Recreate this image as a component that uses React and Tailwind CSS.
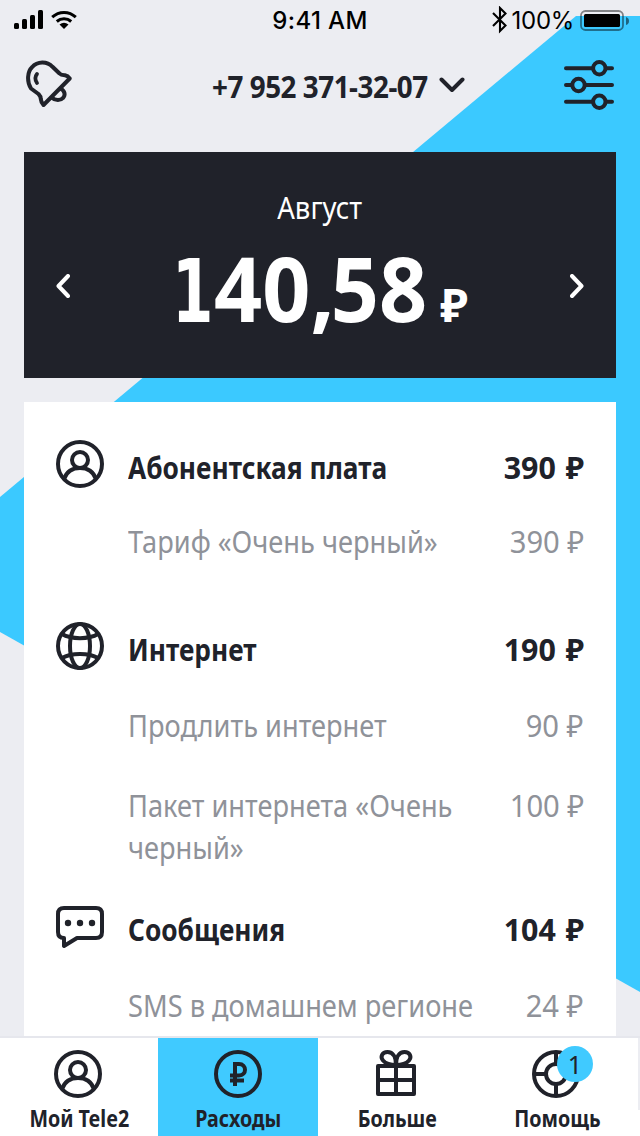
const INK = '#20222a';

function Bell() {
  return (
    <svg viewBox="0 0 48 50" className="h-[50px] w-12" fill="none" stroke={INK} strokeWidth="4" strokeLinejoin="round" strokeLinecap="round">
      <path d="M7 28.500C2.500 21.500 3.500 11.500 8 7.300C13.500 1 23 1 28.500 6.800L35.500 13.500C37 15.200 38.500 15.200 41 15.300Q43.800 15.800 45.700 18.500L19.500 45Q17 42 16.800 39C16.800 36.500 16 35.500 14.500 34Z" />
      <path d="M13 14C11 16.500 11 20 13 23" strokeWidth="3.800" />
      <path d="M36.500 28.500C41.300 31 41.500 35.500 39 38C36.500 40.800 31.500 41 27.500 37.500" strokeLinecap="butt" />
    </svg>
  );
}

function Sliders() {
  return (
    <svg viewBox="0 0 50 50" className="h-[50px] w-[50px]" fill="none" stroke={INK} strokeWidth="4" strokeLinecap="round">
      <path d="M2 8.200H28M42 8.200H48M2 25H8M21 25H48M2 41.800H28M42 41.800H48" />
      <circle cx="35.300" cy="8.200" r="6.200" />
      <circle cx="14.500" cy="25" r="6.200" />
      <circle cx="35.300" cy="41.800" r="6.200" />
    </svg>
  );
}

function Chevron({ d, className, color = '#fff', viewBox }) {
  return (
    <svg viewBox={viewBox} className={className} fill="none" stroke={color} strokeWidth="4" strokeLinecap="round" strokeLinejoin="round">
      <path d={d} />
    </svg>
  );
}

function Person() {
  return (
    <svg viewBox="0 0 48 48" className="h-12 w-12 shrink-0" fill="none" stroke={INK} strokeWidth="4">
      <circle cx="24" cy="24" r="22" />
      <circle cx="24" cy="20" r="8" />
      <path d="M8 39C10.500 32 16 28 24 28S37.500 32 40 39" />
    </svg>
  );
}

function Globe() {
  return (
    <svg viewBox="0 0 48 48" className="h-12 w-12 shrink-0" fill="none" stroke={INK} strokeWidth="4">
      <circle cx="24" cy="24" r="22" />
      <ellipse cx="24" cy="24" rx="10" ry="22" />
      <path d="M6 12C15 17.500 33 17.500 42 12M6 36C15 30.500 33 30.500 42 36" />
    </svg>
  );
}

function Bubble() {
  return (
    <svg viewBox="0 0 48 48" className="h-12 w-12 shrink-0" fill="none" stroke={INK} strokeWidth="4" strokeLinejoin="round">
      <path d="M8 6H40Q46 6 46 12V30Q46 36 40 36H21L8 44V36Q2 36 2 30V12Q2 6 8 6Z" />
      <g fill={INK} stroke="none">
        <circle cx="12" cy="21" r="3.200" />
        <circle cx="24" cy="21" r="3.200" />
        <circle cx="36" cy="21" r="3.200" />
      </g>
    </svg>
  );
}

function RubleCoin() {
  return (
    <svg viewBox="0 0 48 48" className="h-12 w-12" fill="none" stroke={INK} strokeWidth="4">
      <circle cx="24" cy="24" r="22" />
      <path d="M21 36V14H25C33 14 33 25.500 25 25.500H16M16 30.500H30" />
    </svg>
  );
}

function Gift() {
  return (
    <svg viewBox="0 0 48 48" className="h-12 w-12" fill="none" stroke={INK} strokeWidth="4" strokeLinejoin="round">
      <path d="M6 16H42V44H6ZM6 30H42M24 14V44" />
      <path d="M24 15C24 7 21 2 15.500 2C10 2 8 7 11 10.500C14 14 19 15 24 15C29 15 34 14 37 10.500C40 7 38 2 32.500 2C27 2 24 7 24 15Z" />
    </svg>
  );
}

function Lifebuoy() {
  return (
    <svg viewBox="0 0 48 48" className="h-12 w-12" fill="none" stroke={INK} strokeWidth="4">
      <circle cx="24" cy="24" r="22" />
      <circle cx="24" cy="24" r="10" />
      <path d="M24 2V14M24 34V46M2 24H14M34 24H46" />
    </svg>
  );
}

function StatusBar() {
  return (
    <div className="flex h-10 items-center text-black">
      <div className="flex w-[213px] items-center pl-[14px]">
        <svg viewBox="0 0 30 20" className="h-5 w-[30px]">
          <rect x="0" y="13" width="5" height="6" rx="1.500" />
          <rect x="8" y="9" width="5" height="10" rx="1.500" />
          <rect x="16" y="5" width="5" height="14" rx="1.500" />
          <rect x="24" y="0" width="5" height="19" rx="1.500" />
        </svg>
        <svg viewBox="0 0 26 20" className="ml-[7px] h-5 w-[26px]" fill="none" stroke="#000" strokeWidth="3">
          <path d="M1.200 7.200C8 .9 18 .9 24.800 7.200M5.800 11.500C10 7.800 16 7.800 20.200 11.500" />
          <path d="M8.500 14.500Q13 11 17.500 14.500L13 19Z" fill="#000" stroke="none" />
        </svg>
      </div>
      <div className="flex w-[214px] justify-center pt-[2px] font-['Inter'] text-[24px] font-medium tracking-[0.4px]">9:41 AM</div>
      <div className="flex w-[213px] items-center justify-end pr-[10px]">
        <svg viewBox="0 0 16 28" className="mr-1 h-7 w-4" fill="none" stroke="#000" strokeWidth="2.100">
          <path d="M1 7L13.500 19.500L8 25V2L13.500 7.500L1 20" />
        </svg>
        <span className="pt-[2px] font-['Inter'] text-[24px] tracking-[-0.3px]">100%</span>
        <svg viewBox="0 0 50 22" className="mt-[2px] ml-[6px] h-[22px] w-[50px]">
          <rect x="1" y="1" width="42" height="19" rx="4.500" fill="none" stroke="#000" strokeOpacity=".45" strokeWidth="1.800" />
          <rect x="4" y="4" width="36" height="13" rx="1.500" />
          <path d="M46 7Q49 8 49 11T46 15Z" fillOpacity=".5" />
        </svg>
      </div>
    </div>
  );
}

function SectionHead({ icon, title, amount }) {
  return (
    <div className="flex h-12 items-start font-bold text-[#20222a]">
      {icon}
      <span className="mt-[6px] ml-6 min-w-0 flex-1 origin-left scale-x-[0.847] whitespace-nowrap">{title}</span>
      <span className="mt-[6px] origin-right scale-x-[0.980] whitespace-nowrap [word-spacing:2px]">{amount} ₽</span>
    </div>
  );
}

function Item({ children, amount }) {
  return (
    <div className="flex items-start pl-[72px] text-[#8f9299]">
      <span className="min-w-0 flex-1 origin-left scale-x-[0.878] whitespace-nowrap">{children}</span>
      <span className="origin-right scale-x-[0.940] whitespace-nowrap">{amount} ₽</span>
    </div>
  );
}

function Tab({ icon, label, width, active, badge }) {
  return (
    <div className={`relative flex flex-col items-center pt-3 ${width} ${active ? 'bg-[#40caff]' : 'bg-white'}`}>
      <div className={active ? '' : 'mr-[2px]'}>{icon}</div>
      <span className="mt-[3px] origin-center scale-x-[0.855] text-[23px] leading-[34px] font-bold whitespace-nowrap">{label}</span>
      {badge && (
        <span className="absolute top-2 left-[81px] flex h-9 w-9 items-center justify-center rounded-full bg-[#40caff] text-[25px]">{badge}</span>
      )}
    </div>
  );
}

export default function App() {
  return (
    <div className="relative isolate flex h-[1136px] w-[640px] flex-col overflow-hidden bg-[#ecedf2] font-['Noto_Sans',sans-serif] text-[31px] leading-[42px] text-[#20222a]">
      <div className="absolute inset-0 -z-10 bg-[#3bc9ff] [clip-path:polygon(576px_16px,640px_16px,640px_992px,0_632px,0_497px)]" />
      <StatusBar />
      <header className="flex h-28 items-start justify-between pt-5 pr-[26px] pl-6">
        <Bell />
        <div className="mt-[5px] flex items-center">
          <span className="origin-right scale-x-[0.896] font-bold tracking-[-0.500px] whitespace-nowrap">+7 952 371-32-07</span>
          <Chevron viewBox="0 0 26 16" className="mr-[-16px] mb-[2px] ml-[11px] h-4 w-[26px]" color={INK} d="M2.500 2.500L13 13L23.500 2.500" />
        </div>
        <Sliders />
      </header>
      <section className="mx-6 flex h-[226px] shrink-0 items-center justify-between bg-[#20222a] px-8 text-white">
        <Chevron viewBox="0 0 14 24" className="mt-[42px] h-6 w-[14px]" d="M12 2L2.500 12L12 22" />
        <div className="flex h-full flex-col items-center pt-[34px]">
          <span className="scale-x-[0.890]">Август</span>
          <div className="mt-[5px] flex items-baseline leading-[110px] font-bold whitespace-nowrap">
            <span className="w-[42px] origin-left scale-x-[0.760] font-['DejaVu_Sans_Condensed','DejaVu_Sans'] text-[87px]">1</span>
            <span className="origin-left scale-x-[0.947] text-[89px]">40<span className="tracking-[-4px]">,</span>58</span>
            <span className="ml-[1px] text-[46px]">₽</span>
          </div>
        </div>
        <Chevron viewBox="0 0 14 24" className="mt-[42px] h-6 w-[14px]" d="M2 2L11.500 12L2 22" />
      </section>
      <main className="mx-6 mt-6 min-h-0 flex-1 overflow-hidden bg-white px-8 pt-[38px]">
        <SectionHead icon={<Person />} title="Абонентская плата" amount="390" />
        <div className="pt-8"><Item amount="390">Тариф «Очень черный»</Item></div>
        <div className="pt-[60px]"><SectionHead icon={<Globe />} title="Интернет" amount="190" /></div>
        <div className="flex flex-col gap-[38px] pt-[34px]">
          <Item amount="90">Продлить интернет</Item>
          <Item amount="100">Пакет интернета «Очень<br />черный»</Item>
        </div>
        <div className="pt-[34px]"><SectionHead icon={<Bubble />} title="Сообщения" amount="104" /></div>
        <div className="pt-[34px]"><Item amount="24">SMS в домашнем регионе</Item></div>
      </main>
      <nav className="flex h-[100px] shrink-0 border-t-2 border-[#e6e7ed] bg-white">
        <Tab icon={<Person />} label="Мой Tele2" width="w-[158px]" />
        <Tab icon={<RubleCoin />} label="Расходы" width="w-40" active />
        <Tab icon={<Gift />} label="Больше" width="w-[158px]" />
        <Tab icon={<Lifebuoy />} label="Помощь" width="w-[162px]" badge="1" />
        <div className="h-[72px] w-[2px] bg-[#ecedf2]" />
      </nav>
    </div>
  );
}
